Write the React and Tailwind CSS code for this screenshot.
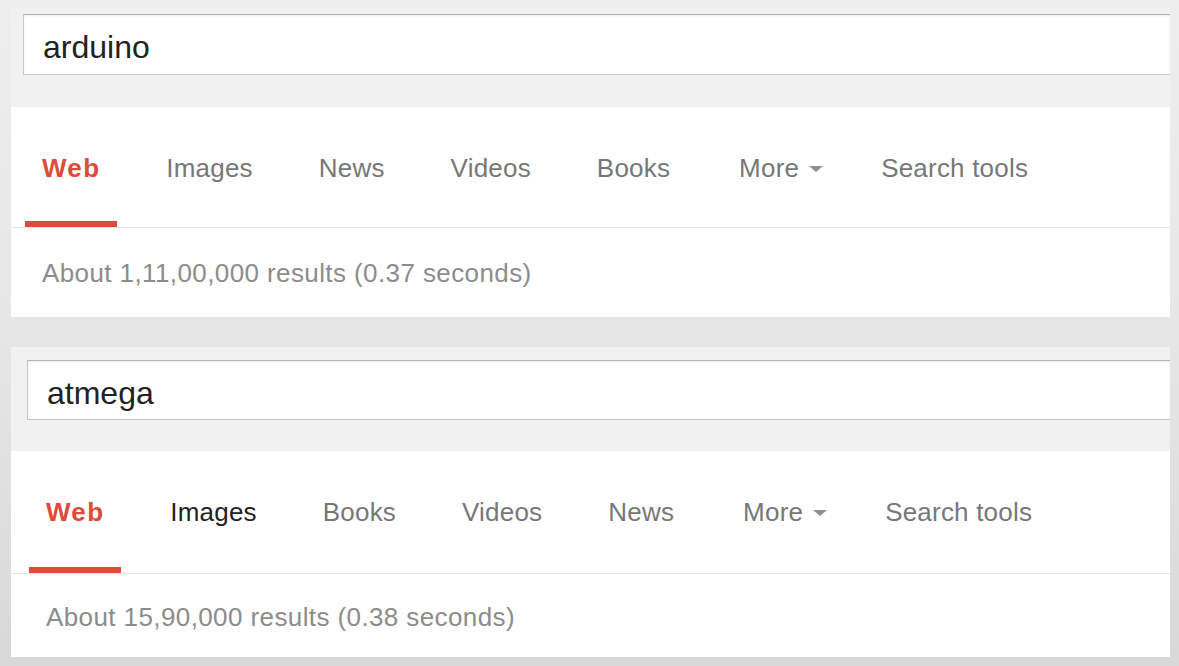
import React from 'react'

const font = { fontFamily: '"Liberation Sans", Arial, sans-serif' }

const Tab = ({ label, active, dark, more, extra }) => (
  <div
    className={`h-full px-[17px] pt-[46px] leading-[30px] text-[26px] border-b-[6px] flex items-start ${extra || ''} ${
      active ? 'border-[#dd4b39] text-[#dd4b39] font-bold tracking-[1.3px]' : 'border-transparent tracking-[0.2px]'
    } ${!active && dark ? 'text-[#222222]' : ''} ${!active && !dark ? 'text-[#777777]' : ''}`}
  >
    <span>{label}</span>
    {more && (
      <span className="ml-[10px] mt-[13px] w-0 h-0 border-l-[7px] border-r-[7px] border-t-[6px] border-l-transparent border-r-transparent border-t-[#909090]"></span>
    )}
  </div>
)

const Panel = ({ query, tabs, results, top, white }) => (
  <div className="w-[1159px] bg-white">
    {/* search bar strip */}
    <div className={`bg-[#f1f1f1] ${top.strip}`}>
      <div
        className={`${top.box} border border-r-0 border-[#c6c6c6] border-t-[#b5b5b5] bg-white flex items-center pl-[19px] pt-[5px] text-[32px] text-[#222222] shadow-[inset_0_1px_2px_rgba(0,0,0,0.08)]`}
      >
        {query}
      </div>
    </div>

    {/* tabs */}
    <div className={`flex border-b border-[#e6e6e6] ${white.row}`}>
      {tabs.map((t) => (
        <Tab key={t.label} {...t} />
      ))}
    </div>

    {/* result stats */}
    <div className={`text-[26px] leading-[30px] tracking-[0.4px] text-[#8c8c8c] ${white.stats}`}>{results}</div>
  </div>
)

export default function App() {
  return (
    <div
      className="w-[1179px] h-[666px] overflow-hidden bg-gradient-to-b from-[#eeeeee] via-[#e6e6e6] to-[#d8d8d8] pl-[11px] pt-[7px] flex flex-col gap-[30px]"
      style={font}
    >
      <Panel
        query="arduino"
        top={{ strip: 'h-[100px] pl-[12px] pt-[7px]', box: 'h-[61px]' }}
        white={{ row: 'h-[121px] pl-[14px] gap-[32px]', stats: 'pl-[31px] pt-[30px] pb-[29px]' }}
        tabs={[
          { label: 'Web', active: true },
          { label: 'Images' },
          { label: 'News' },
          { label: 'Videos' },
          { label: 'Books' },
          { label: 'More', more: true, extra: 'ml-[3px] pr-[9px]' },
          { label: 'Search tools' },
        ]}
        results="About 1,11,00,000 results (0.37 seconds)"
      />
      <Panel
        query="atmega"
        top={{ strip: 'h-[104px] pl-[16px] pt-[13px]', box: 'h-[60px]' }}
        white={{ row: 'h-[123px] pl-[18px] gap-[32px]', stats: 'pl-[35px] pt-[28px] pb-[25px]' }}
        tabs={[
          { label: 'Web', active: true },
          { label: 'Images', dark: true },
          { label: 'Books' },
          { label: 'Videos' },
          { label: 'News' },
          { label: 'More', more: true, extra: 'ml-[3px] pr-[9px]' },
          { label: 'Search tools' },
        ]}
        results="About 15,90,000 results (0.38 seconds)"
      />
    </div>
  )
}
